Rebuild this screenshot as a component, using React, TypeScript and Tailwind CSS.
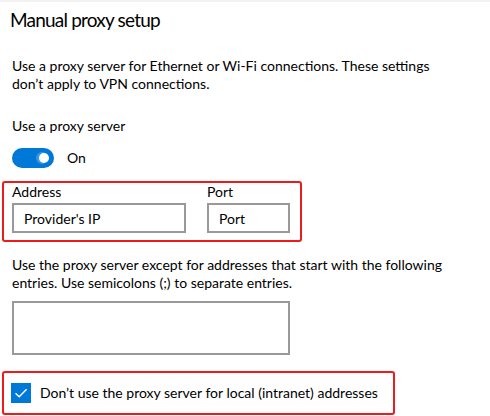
import React from "react";

const font = { fontFamily: 'Lato, "Noto Sans", sans-serif' };

function Toggle() {
  return (
    <div className="flex items-center gap-[13px]">
      <div className="relative h-[20px] w-[42px] rounded-full bg-[#0078d7]">
        <div className="absolute right-[10px] top-[4px] h-[12px] w-[8px] rounded-l-full bg-[#3d95e0]" />
        <div className="absolute right-[5px] top-[5px] h-[10px] w-[10px] rounded-full bg-white" />
      </div>
      <span className="text-[14px] leading-[18px] text-black">On</span>
    </div>
  );
}

function Checkbox() {
  return (
    <div className="flex h-[20px] w-[20px] shrink-0 items-center justify-center bg-[#0078d7]">
      <svg width="14" height="14" viewBox="0 0 14 14" fill="none">
        <path d="M1.5 7.2 L5.2 10.8 L12.6 3.2" stroke="white" strokeWidth="1.4" />
      </svg>
    </div>
  );
}

export default function App() {
  return (
    <div className="min-h-[416px] w-[490px] overflow-hidden bg-white text-black" style={font}>
      <div className="h-[2px] bg-[#f2f2f0]" />
      <div className="pl-3">
        <h1 className="ml-[-2px] mt-[4px] whitespace-nowrap text-[19px] font-normal leading-[28px] tracking-[-0.8px]">
          Manual proxy setup
        </h1>

        <p className="mt-[23px] whitespace-nowrap text-[14px] leading-[18px]">
          Use a proxy server for Ethernet or Wi-Fi connections. These settings
          <br />
          don’t apply to VPN connections.
        </p>

        <p className="mt-[24px] text-[14px] leading-[18px]">Use a proxy server</p>

        <div className="mt-[13px]">
          <Toggle />
        </div>

        <div className="ml-[-10px] mt-[13px] w-[300px] rounded-[3px] border-2 border-[#ec1c1c] pb-[7px] pl-2 pr-[10px]">
          <div className="flex gap-[21px]">
            <div className="flex flex-col">
              <span className="text-[14px] leading-[18px]">Address</span>
              <div className="mt-[2px] flex h-[30px] w-[174px] items-center border-2 border-[#999999] pl-[10px] text-[14px]">
                Provider's IP
              </div>
            </div>
            <div className="flex flex-col">
              <span className="text-[14px] leading-[18px]">Port</span>
              <div className="mt-[2px] flex h-[30px] w-[83px] items-center border-2 border-[#999999] pl-[10px] text-[14px]">
                Port
              </div>
            </div>
          </div>
        </div>

        <p className="mt-[14px] whitespace-nowrap text-[14px] leading-[18px]">
          Use the proxy server except for addresses that start with the following
          <br />
          entries. Use semicolons (;) to separate entries.
        </p>

        <div className="mt-[9px] h-[54px] w-[278px] border-2 border-[#999999]" />

        <div className="ml-[-10px] mt-[16px] flex h-[44px] w-[393px] items-center gap-[9px] rounded-[3px] border-2 border-[#ec1c1c] pl-[7px]">
          <Checkbox />
          <span className="whitespace-nowrap text-[14px] leading-[18px]">
            Don’t use the proxy server for local (intranet) addresses
          </span>
        </div>
      </div>
    </div>
  );
}
